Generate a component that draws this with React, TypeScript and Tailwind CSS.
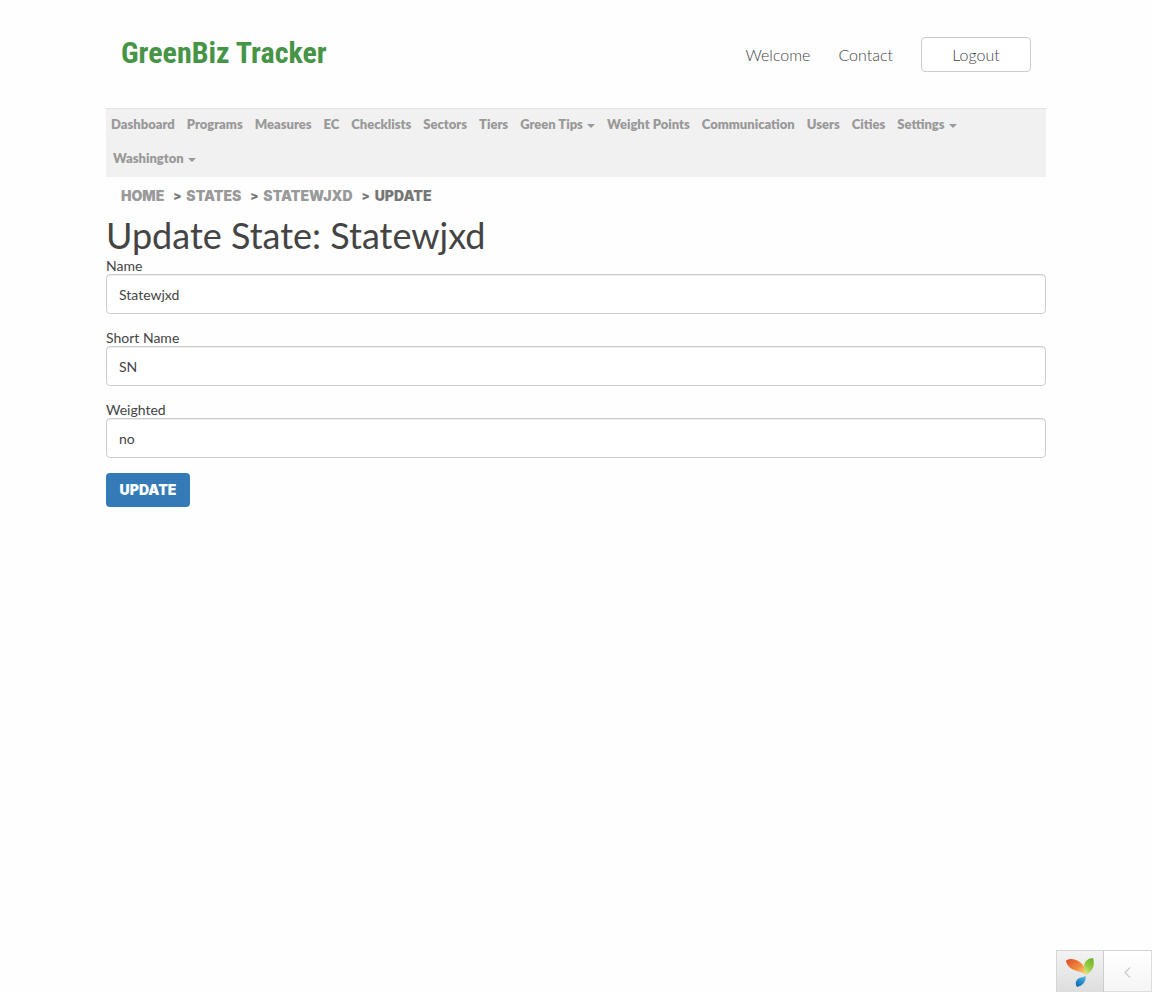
import React from "react";

const navItems: { label: string; menu?: boolean }[] = [
  { label: "Dashboard" },
  { label: "Programs" },
  { label: "Measures" },
  { label: "EC" },
  { label: "Checklists" },
  { label: "Sectors" },
  { label: "Tiers" },
  { label: "Green Tips", menu: true },
  { label: "Weight Points" },
  { label: "Communication" },
  { label: "Users" },
  { label: "Cities" },
  { label: "Settings", menu: true },
];

const fields = [
  { id: "name", label: "Name", value: "Statewjxd" },
  { id: "short-name", label: "Short Name", value: "SN" },
  { id: "weighted", label: "Weighted", value: "no" },
];

function NavLink({ label, menu }: { label: string; menu?: boolean }) {
  return (
    <a href="#" className="flex items-center gap-1 pb-1 whitespace-nowrap">
      {label}
      {menu && (
        <svg viewBox="0 0 8 4" className="mt-1 h-1 w-2" fill="currentColor" aria-hidden="true">
          <path d="M0 0h8L4 4z" />
        </svg>
      )}
    </a>
  );
}

function Crumb({ label }: { label: string }) {
  return (
    <li className="flex gap-[7px]">
      <a href="#" className="text-[#999]">{label}</a>
      <span className="w-3 text-center text-xs leading-5" aria-hidden="true">&gt;</span>
    </li>
  );
}

function DebugToolbar() {
  return (
    <aside className="fixed right-0 bottom-0 flex h-[42px] w-24 border-t border-l border-[#d5d5d5]">
      <a href="#" aria-label="Debugger" className="flex w-[47px] items-end justify-center border-r border-[#ccc] bg-linear-to-b from-[#f3f3f3] to-[#dedede] pb-1">
        <svg viewBox="0 0 30 32" className="h-8 w-[30px]" aria-hidden="true">
          <defs>
            <linearGradient id="leaf-orange" x1="0" y1="0" x2="1" y2="1">
              <stop offset="0" stopColor="#dc4a26" />
              <stop offset="0.55" stopColor="#f08a3c" />
              <stop offset="1" stopColor="#fbe27c" />
            </linearGradient>
            <linearGradient id="leaf-green" x1="0.7" y1="0" x2="0.2" y2="1">
              <stop offset="0" stopColor="#6fb62c" />
              <stop offset="0.5" stopColor="#96ca42" />
              <stop offset="1" stopColor="#e5ec9a" />
            </linearGradient>
            <linearGradient id="leaf-blue" x1="0.8" y1="0" x2="0.2" y2="1">
              <stop offset="0" stopColor="#52b4e8" />
              <stop offset="1" stopColor="#0767b3" />
            </linearGradient>
          </defs>
          <path d="M1 4.500C4 2 10 2.500 14 5.500c5 3.500 7 8 7 13.500-3-3-8-3-13-5.500C4 11.500 1 8 1 4.500z" fill="url(#leaf-orange)" />
          <path d="M28 2c1.500 5 1 10-2.500 13.500-1.500 1.500-3 2.500-4.500 4 0-3.500-2.500-6-2-10C19.500 5 23.500 2.200 28 2z" fill="url(#leaf-green)" />
          <path d="M20.500 20c1 5.500-2.500 9.500-8.500 11-2-3.500-1.500-6.500 1.500-8.500 2.500-1.500 5-1 7-2.500z" fill="url(#leaf-blue)" />
        </svg>
      </a>
      <button type="button" aria-label="Expand toolbar" className="flex flex-1 items-center justify-center border-r border-b border-[#ddd] bg-linear-to-b from-white to-[#f5f5f5] pt-[3px] text-[#aaa]">
        <svg viewBox="0 0 7 11" className="h-[11px] w-[7px]" fill="none" stroke="currentColor" aria-hidden="true">
          <path d="M6 .5l-5 5 5 5" />
        </svg>
      </button>
    </aside>
  );
}

export default function App() {
  return (
    <div className="min-h-screen bg-[#fefefe] font-['Lato',sans-serif] text-sm text-[#444]">
      <div className="mx-auto max-w-[940px]">
        <header className="flex items-start justify-between px-[15px] pt-[37px] pb-9">
          <a href="#" className="font-['Roboto_Condensed','Roboto',sans-serif] text-3xl leading-8 font-bold text-[#469446]">
            GreenBiz Tracker
          </a>
          <nav aria-label="Account" className="flex items-center gap-7 text-base font-light text-[#444]">
            <a href="#">Welcome</a>
            <a href="#">Contact</a>
            <button type="button" className="h-[35px] w-[110px] rounded border border-[#ccc] bg-white">
              Logout
            </button>
          </nav>
        </header>

        <nav aria-label="Main" className="border-t border-[#e4e4e4] bg-[#f1f1f1] text-[13px] leading-[30px] font-extrabold text-[#999]">
          <div className="flex flex-wrap gap-x-3 px-[5px]">
            {navItems.map((item) => (
              <NavLink key={item.label} label={item.label} menu={item.menu} />
            ))}
          </div>
          <div className="flex px-[7px]">
            <NavLink label="Washington" menu />
          </div>
        </nav>

        <ol className="flex flex-wrap gap-[3px] px-[15px] pt-[9px] font-['Inter',sans-serif] text-sm leading-5 font-black text-[#777]">
          <Crumb label="HOME" />
          <Crumb label="STATES" />
          <Crumb label="STATEWJXD" />
          <li aria-current="page">UPDATE</li>
        </ol>

        <main>
          <h1 className="mt-[9px] text-4xl leading-10">Update State: Statewjxd</h1>
          <form className="mt-[3px]" onSubmit={(event) => event.preventDefault()}>
            <div className="flex flex-col gap-4">
              {fields.map((field) => (
                <div key={field.id}>
                  <label htmlFor={field.id} className="block leading-4">{field.label}</label>
                  <input
                    id={field.id}
                    defaultValue={field.value}
                    className="block h-10 w-full rounded border border-[#ccc] bg-white px-3 shadow-[inset_0_1px_1px_rgba(0,0,0,0.075)]"
                  />
                </div>
              ))}
            </div>
            <button type="submit" className="mt-[15px] h-[34px] w-[84px] rounded bg-[#337ab7] font-['Inter',sans-serif] text-sm font-black text-white">
              UPDATE
            </button>
          </form>
        </main>
      </div>
      <DebugToolbar />
    </div>
  );
}
